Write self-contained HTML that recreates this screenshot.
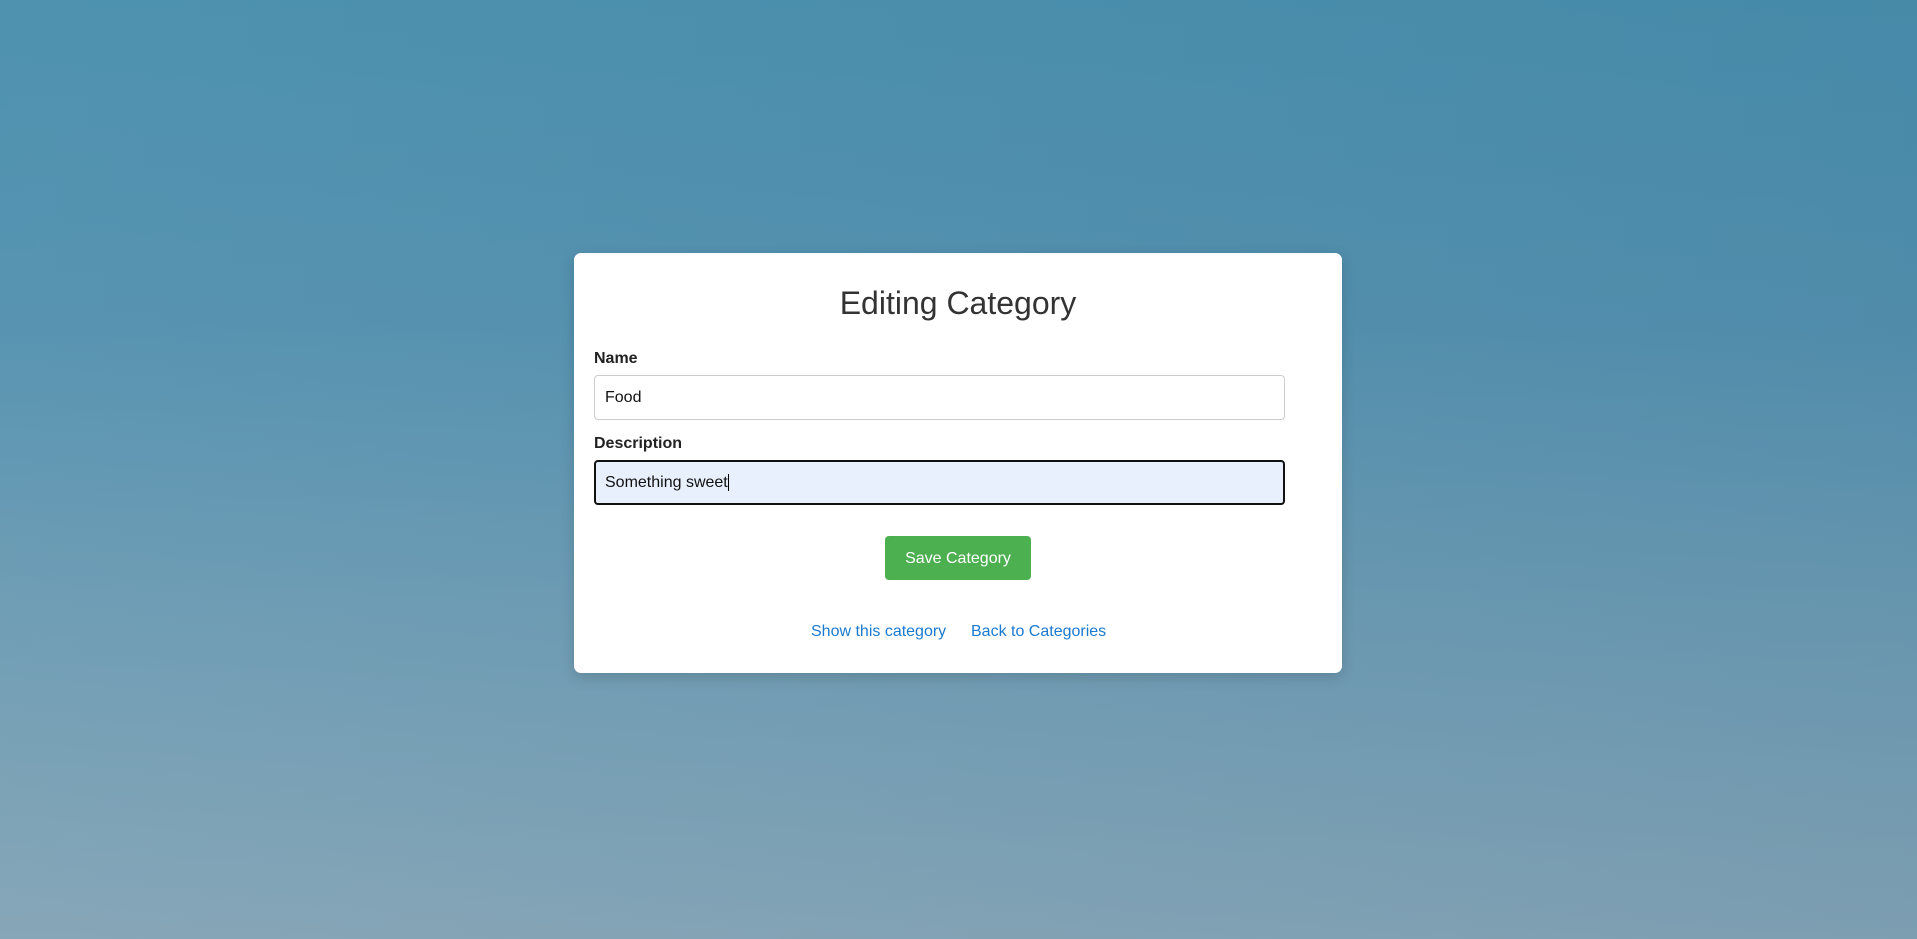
<!DOCTYPE html>
<html><head><meta charset="utf-8"><style>
html,body{margin:0;padding:0;width:1917px;height:939px;overflow:hidden}
body{background:linear-gradient(to bottom,#4a90ae 0%,#5592b0 35%,#6d9cb4 65%,#85a5b7 100%);font-family:"Liberation Sans",Arial,sans-serif;position:relative}
.bg2{position:absolute;inset:0;background:linear-gradient(to right,rgba(255,255,255,0.02),rgba(0,40,80,0.06))}
.card{position:absolute;left:574px;top:253px;width:768px;height:420px;background:#fff;border-radius:7px;box-shadow:0 4px 14px rgba(0,0,0,0.15)}
h1{position:absolute;top:283px;margin:0;text-align:center;font-weight:normal;font-size:32px;color:#333;line-height:40px}
.lbl{position:absolute;left:594px;font-weight:bold;font-size:16px;color:#222}
.inp{position:absolute;left:594px;width:691px;height:45px;box-sizing:border-box;border:1px solid #ccc;border-radius:4px;font-size:16px;line-height:43px;padding-left:10px;color:#111}
.inp.f{border:2px solid #111;background:#e8f0fe;padding-left:9px;line-height:41px}
.btn{position:absolute;left:885px;top:536px;width:146px;height:44px;background:#4caf50;color:#fff;border-radius:4px;text-align:center;line-height:45px;font-size:16px}
.lnk{position:absolute;top:621px;font-size:16px;color:#1a7ad0;line-height:22px}
</style></head><body><div class="bg2"></div>
<div class="card"></div>
<h1 style="left:574px;width:768px">Editing Category</h1>
<div class="lbl" style="top:350px">Name</div>
<div class="inp" style="top:375px">Food</div>
<div class="lbl" style="top:435px">Description</div>
<div class="inp f" style="top:460px">Something sweet<span style="border-left:1px solid #000"></span></div>
<div class="btn">Save Category</div>
<div class="lnk" style="left:811px">Show this category</div>
<div class="lnk" style="left:971px">Back to Categories</div>
</body></html>
